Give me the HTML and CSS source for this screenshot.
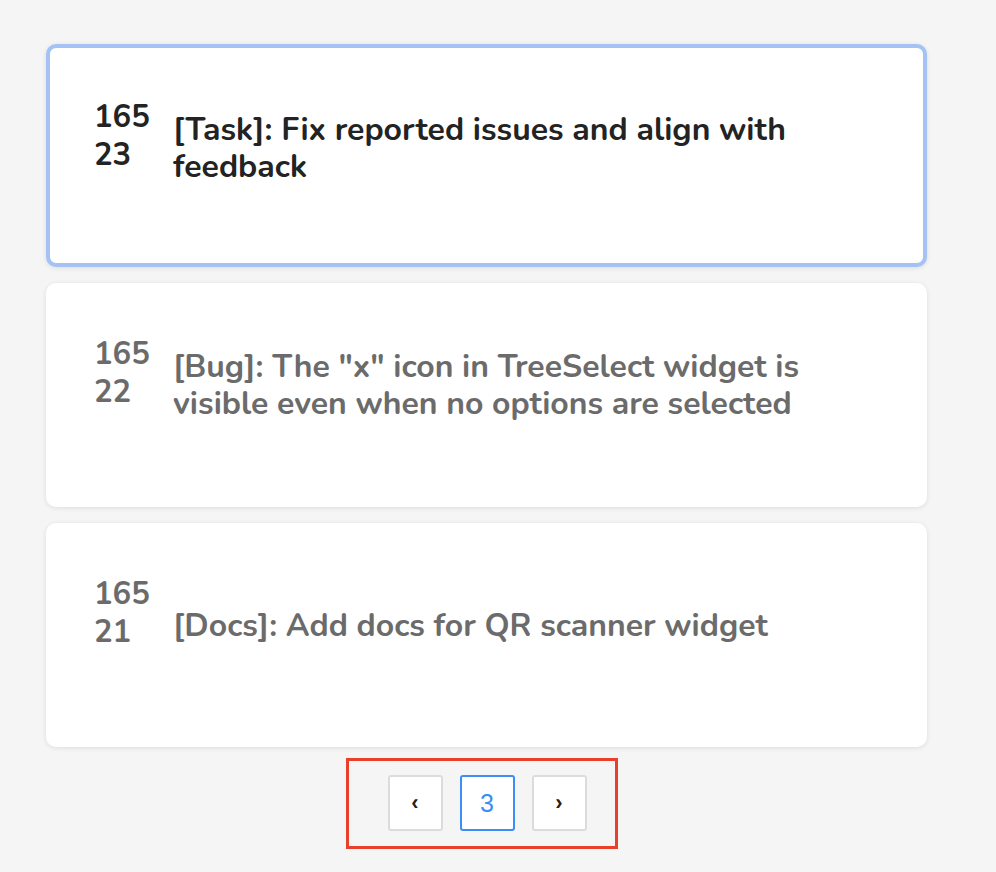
FILE: index.html
```html
<!DOCTYPE html>
<html lang="en">
<head>
<meta charset="utf-8">
<title>Issues</title>
<link rel="stylesheet" href="styles.css">
</head>
<body>
<main class="page">
  <section class="list">
    <article class="card card-active">
      <div class="num">16523</div>
      <div class="title">[Task]: Fix reported issues and align with feedback</div>
    </article>
    <article class="card">
      <div class="num">16522</div>
      <div class="title">[Bug]: The "x" icon in TreeSelect widget is visible even when no options are selected</div>
    </article>
    <article class="card">
      <div class="num">16521</div>
      <div class="title">[Docs]: Add docs for QR scanner widget</div>
    </article>
  </section>
  <nav class="pager-row">
    <div class="pager">
      <button class="pg-btn">&#8249;</button>
      <button class="pg-btn pg-active">3</button>
      <button class="pg-btn">&#8250;</button>
    </div>
  </nav>
</main>
</body>
</html>
```

FILE: styles.css
```css
* { box-sizing: border-box; }
html, body { margin: 0; padding: 0; background: #f5f5f5; }
body { font-family: "Nunito", "Lato", "Noto Sans", sans-serif; }
.page { padding: 44px 0 0 46px; width: 927px; }
.list { display: flex; flex-direction: column; gap: 16px; }
.card {
  height: 224px;
  background: #fff;
  border-radius: 10px;
  box-shadow: 0 1px 5px rgba(0,0,0,0.10);
  display: flex;
  align-items: center;
  padding: 0 48px 44px 48px;
  color: #6b6b6b;
  font-weight: 700;
}
.card-active {
  border: 4px solid #a5c2f5;
  padding: 0 44px 40px 44px;
  color: #232323;
  height: 223px;
}
.num {
  flex: 0 0 62px;
  width: 62px;
  word-break: break-all;
  font-size: 31px;
  line-height: 38px;
  margin-right: 17px;
}
.title {
  flex: 1;
  font-size: 32px;
  line-height: 37px;
  margin-top: 24px;
}
.pager-row { display: flex; justify-content: center; margin-top: 11px; }
.pager {
  display: flex;
  gap: 17px;
  border: 3px solid #e8402b;
  padding: 14px 28px 15px 39px;
  margin-right: 10px;
}
.pg-btn {
  width: 55px;
  height: 56px;
  background: #fff;
  border: 2px solid #dcdcdc;
  border-radius: 3px;
  font-family: "Liberation Sans", Arial, sans-serif;
  font-size: 22px;
  font-weight: 700;
  color: #222;
  padding: 0;
  display: flex;
  align-items: center;
  justify-content: center;
}
.pg-active {
  border-color: #3b8ef6;
  color: #3b8ef6;
  font-size: 25px;
  font-weight: 400;
}
```
